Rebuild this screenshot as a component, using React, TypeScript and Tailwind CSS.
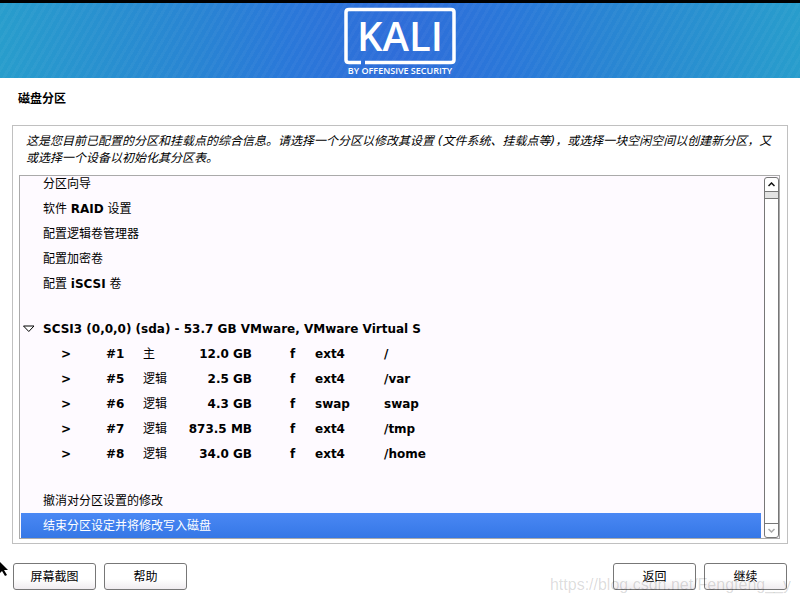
import { useState } from "react";

const actions = [
  ["分区向导"],
  ["软件 ", "RAID", " 设置"],
  ["配置逻辑卷管理器"],
  ["配置加密卷"],
  ["配置 ", "iSCSI", " 卷"],
];

const partitions = [
  { id: "#1", kind: "主", size: "12.0 GB", fs: "ext4", mount: "/" },
  { id: "#5", kind: "逻辑", size: "2.5 GB", fs: "ext4", mount: "/var" },
  { id: "#6", kind: "逻辑", size: "4.3 GB", fs: "swap", mount: "swap" },
  { id: "#7", kind: "逻辑", size: "873.5 MB", fs: "ext4", mount: "/tmp" },
  { id: "#8", kind: "逻辑", size: "34.0 GB", fs: "ext4", mount: "/home" },
];

function Row({ parts, selected, onSelect }: { parts: string[]; selected: boolean; onSelect: () => void }) {
  return (
    <button
      type="button"
      onClick={onSelect}
      className={
        "ml-px flex h-[25px] shrink-0 items-center whitespace-pre pl-[22px] text-left " +
        (selected ? "bg-linear-to-b from-[#4a88f4] to-[#3577e6] text-white" : "")
      }
    >
      {parts.map((p, i) => (
        <span key={i} className={i % 2 ? "font-bold" : ""}>{p}</span>
      ))}
    </button>
  );
}

function FooterButton({ label }: { label: string }) {
  return (
    <button
      type="button"
      className="h-[27px] w-[83px] rounded-[3px] border border-[#777] bg-linear-to-b from-white from-60% to-[#f0ecf0] text-[12px]"
    >
      {label}
    </button>
  );
}

function Logo() {
  return (
    <svg width="114" height="72" viewBox="0 0 114 72" role="img" aria-label="KALI by Offensive Security">
      <path d="M18 55.500H6Q3 55.500 3 53V5Q3 2.500 6 2.500H108Q111 2.500 111 5V53Q111 55.500 108 55.500H22" fill="none" stroke="#fff" strokeWidth="3.500" />
      <text x="57" y="44" textAnchor="middle" fontSize="40" fontWeight="600" fill="#fff" fontFamily="'Open Sans','Noto Sans',sans-serif">KALI</text>
      <text x="57" y="67" textAnchor="middle" fontSize="9" fontWeight="600" fill="#fff" fontFamily="'Open Sans','Noto Sans',sans-serif">BY OFFENSIVE SECURITY</text>
    </svg>
  );
}

export default function App() {
  const [selected, setSelected] = useState("finish");
  return (
    <div className="relative min-h-screen bg-white font-['DejaVu_Sans','Noto_Sans_CJK_SC',sans-serif] text-[12px] text-black">
      <header className="flex h-[78px] justify-center border-t-3 border-black bg-[repeating-linear-gradient(120deg,#0000_0px,#0000_4px,#ffffff08_4px,#ffffff08_7px),linear-gradient(90deg,#289dcc,#2984d3_25%,#2a78d9_36%,#2f6dd9_50%,#2a78d9_64%,#2984d3_75%,#289dcc)] pt-1">
        <Logo />
      </header>
      <h1 className="mt-3 px-[18px] text-[12px] leading-[18px] font-bold">磁盘分区</h1>

      <main className="mx-3 mt-[17px] border border-[#c0c0c0] pt-[7px] pr-[7px] pb-1 pl-1.5">
        <p className="pr-1.5 pl-[7px] text-[12px] leading-[17px] italic">
          这是您目前已配置的分区和挂载点的综合信息。请选择一个分区以修改其设置 (文件系统、挂载点等)，或选择一块空闲空间以创建新分区，又或选择一个设备以初始化其分区表。
        </p>
        <div className="mt-2 flex overflow-hidden border border-[#aaa] bg-[#fefaff]">
          <div className="-mt-[5px] mr-[3px] flex grow flex-col">
            {actions.map((parts) => (
              <Row key={parts.join("")} parts={parts} selected={selected === parts.join("")} onSelect={() => setSelected(parts.join(""))} />
            ))}
            <button type="button" aria-expanded="true" className="mt-[21px] flex h-6 items-center gap-2 pl-[3px] font-bold">
              <svg width="12" height="8" viewBox="0 0 12 8" aria-hidden="true">
                <path d="M.500 1H11L5.800 6.500Z" fill="#fff" stroke="#000" />
              </svg>
              SCSI3 (0,0,0) (sda) - 53.7 GB VMware, VMware Virtual S
            </button>
            <table className="w-[480px] table-fixed text-left font-bold">
              <tbody>
                {partitions.map((p) => (
                  <tr key={p.id} className="h-[25px]">
                    <td className="w-[86px] pl-[41px]">&gt;</td>
                    <td className="w-[37px]">{p.id}</td>
                    <td className="w-[37px] font-normal">{p.kind}</td>
                    <td className="w-[72px] text-right whitespace-nowrap">{p.size}</td>
                    <td className="w-[63px] pl-[38px]">f</td>
                    <td className="w-[69px]">{p.fs}</td>
                    <td>{p.mount}</td>
                  </tr>
                ))}
              </tbody>
            </table>
            <div className="mt-[22px] flex flex-col">
              <Row parts={["撤消对分区设置的修改"]} selected={selected === "undo"} onSelect={() => setSelected("undo")} />
              <Row parts={["结束分区设定并将修改写入磁盘"]} selected={selected === "finish"} onSelect={() => setSelected("finish")} />
            </div>
          </div>
          <div className="mt-px flex w-[15px] flex-col rounded-[3px] border border-[#777] bg-white">
            <button type="button" aria-label="向上滚动" className="flex h-[14px] items-center justify-center border-b border-[#777]">
              <svg width="7" height="5" viewBox="0 0 7 5"><path d="M.5 4L3.500 1L6.500 4" fill="none" stroke="#111" strokeWidth="1.500" /></svg>
            </button>
            <div className="h-[7px] border-b border-[#777] bg-[#e2e2e2]" />
            <div className="grow" />
            <button type="button" aria-label="向下滚动" className="flex h-[14px] items-center justify-center border-t border-[#777]">
              <svg width="7" height="5" viewBox="0 0 7 5"><path d="M.5 1L3.500 4L6.500 1" fill="none" stroke="#aaa" strokeWidth="1.500" /></svg>
            </button>
          </div>
        </div>
      </main>

      <footer className="mx-[13px] mt-[19px] flex gap-2">
        <FooterButton label="屏幕截图" />
        <FooterButton label="帮助" />
        <div className="grow" />
        <FooterButton label="返回" />
        <FooterButton label="继续" />
      </footer>

      <span className="pointer-events-none absolute right-[9px] bottom-[6px] font-['Liberation_Sans',sans-serif] text-[16px] leading-6 text-black/15">
        https://blog.csdn.net/Fengfeng__y
      </span>
      <svg className="absolute bottom-[26px] left-0" width="9" height="17" viewBox="0 0 9 17" aria-hidden="true">
        <path d="M0 2L8 10H4L7 15L5 16L2 11L0 13Z" fill="#000" />
      </svg>
    </div>
  );
}
